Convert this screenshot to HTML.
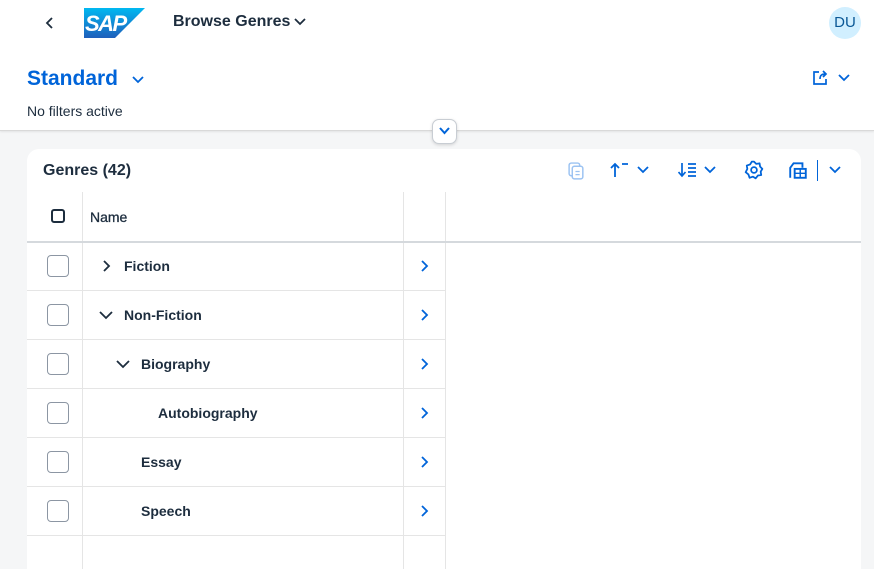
<!DOCTYPE html>
<html><head><style>
*{margin:0;padding:0;box-sizing:border-box}
body{width:874px;height:555px;overflow:hidden;background:#f5f6f7;font-family:"Liberation Sans",sans-serif;color:#1d2d3e;position:relative}
.a{position:absolute}
.hdr{left:0;top:0;width:874px;height:131px;background:#fff;border-bottom:1px solid #d9d9d9;box-shadow:0 1px 2px rgba(0,0,0,.08)}
.card{left:27px;top:149px;width:834px;height:420px;background:#fff;border-radius:12px 12px 0 0;overflow:hidden}
.vl{position:absolute;width:1px;background:#e5e5e5}
.hl{position:absolute;height:1px;background:#e5e5e5;left:0;width:418px}
.cb{position:absolute;left:20px;width:22px;height:22px;border:1px solid #8c96a3;border-radius:4px;background:#fff}
.t{position:absolute;font-size:14px;font-weight:bold;color:#1d2d3e}
svg{position:absolute}
</style></head><body>
<div class="a hdr"></div>
<svg style="left:44px;top:16px" width="12" height="14" viewBox="0 0 12 14"><path d="M8 2 L3 7 L8 12" fill="none" stroke="#1d2d3e" stroke-width="1.8"/></svg>
<svg style="left:84px;top:8px" width="61" height="30" viewBox="0 0 61 30"><defs><linearGradient id="g" x1="0" y1="0" x2="0" y2="1"><stop offset="0" stop-color="#00b8f1"/><stop offset="1" stop-color="#1e5fbb"/></linearGradient></defs><path d="M0 0 H61 L31 30 H0 Z" fill="url(#g)"/><text x="1" y="23" font-family="Liberation Sans" font-weight="bold" font-style="italic" font-size="22" fill="#fff" letter-spacing="-1.5">SAP</text></svg>
<div class="a" style="left:173px;top:13px;font-size:16px;font-weight:bold">Browse Genres</div>
<svg style="left:294px;top:17px" width="12" height="10" viewBox="0 0 12 10"><path d="M1 2 L6 7 L11 2" fill="none" stroke="#1d2d3e" stroke-width="1.8"/></svg>
<div class="a" style="left:829px;top:7px;width:32px;height:32px;border-radius:50%;background:#d1efff;color:#0a5896;font-size:15px;text-align:center;line-height:32px">DU</div>
<div class="a" style="left:27px;top:67px;font-size:21px;font-weight:bold;color:#0064d9">Standard</div>
<svg style="left:132px;top:75px" width="12" height="10" viewBox="0 0 12 10"><path d="M1 2 L6 7 L11 2" fill="none" stroke="#0064d9" stroke-width="1.8"/></svg>
<div class="a" style="left:27px;top:103px;font-size:14px">No filters active</div>
<svg style="left:811px;top:69px" width="18" height="18" viewBox="0 0 18 18"><path d="M8 3 H3 V15 H15 V10 M9 10 C9 6 11 5 15 5 M12 2 L15 5 L12 8" fill="none" stroke="#0064d9" stroke-width="1.7"/></svg>
<svg style="left:838px;top:73px" width="12" height="10" viewBox="0 0 12 10"><path d="M1 2 L6 7 L11 2" fill="none" stroke="#0064d9" stroke-width="1.8"/></svg>
<div class="a" style="left:432px;top:119px;width:25px;height:25px;background:#fff;border:1px solid #c8cdd3;border-radius:7px;box-shadow:0 1px 3px rgba(0,0,0,.15)"></div>
<svg style="left:438px;top:126px" width="13" height="10" viewBox="0 0 13 10"><path d="M2 2 L6.5 7 L11 2" fill="none" stroke="#0064d9" stroke-width="2"/></svg>
<div class="a card">
 <div class="t" style="left:16px;top:13px;font-size:16px">Genres (42)</div>
 <svg style="left:541px;top:13px" width="17" height="19" viewBox="0 0 16 18"><rect x="1" y="1" width="10" height="12" rx="2" fill="none" stroke="#9cc3f2" stroke-width="1.4"/><rect x="4" y="4" width="10" height="12" rx="2" fill="#fff" stroke="#9cc3f2" stroke-width="1.4"/><path d="M7 9 H11 M7 12 H11" stroke="#9cc3f2" stroke-width="1.2"/></svg>
 <svg style="left:583px;top:13px" width="20" height="16" viewBox="0 0 20 16"><path d="M5 15 V2 M1 6 L5 2 L9 6 M12 2 H18" fill="none" stroke="#0064d9" stroke-width="1.8"/></svg>
 <svg style="left:610px;top:16px" width="12" height="10" viewBox="0 0 12 10"><path d="M1 2 L6 7 L11 2" fill="none" stroke="#0064d9" stroke-width="1.8"/></svg>
 <svg style="left:651px;top:13px" width="20" height="16" viewBox="0 0 20 16"><path d="M4 1 V14 M0.5 10 L4 14 L7.5 10 M10 2 H18 M10 6 H18 M10 10 H18 M10 14 H18" fill="none" stroke="#0064d9" stroke-width="1.7"/></svg>
 <svg style="left:677px;top:16px" width="12" height="10" viewBox="0 0 12 10"><path d="M1 2 L6 7 L11 2" fill="none" stroke="#0064d9" stroke-width="1.8"/></svg>
 <svg style="left:717px;top:11px" width="20" height="20" viewBox="0 0 18 18"><path d="M9 1.5 L11 3.5 L14 3 L14.5 6 L16.5 8 L15 10.5 L15.5 13.5 L12.5 14 L10.5 16.5 L8 15 L5 16 L4 13 L1.5 11 L3 8 L2.5 5 L5.5 4 L7 1.5 Z" fill="none" stroke="#0064d9" stroke-width="1.6" stroke-linejoin="round"/><circle cx="9" cy="9" r="2.6" fill="none" stroke="#0064d9" stroke-width="1.6"/></svg>
 <svg style="left:761px;top:11px" width="20" height="20" viewBox="0 0 18 18"><path d="M2 16 V7 L5 3 H13 V7" fill="none" stroke="#0064d9" stroke-width="1.7"/><rect x="6" y="8" width="10" height="8" fill="#fff" stroke="#0064d9" stroke-width="1.7"/><path d="M11 8 V16 M6 12 H16" stroke="#0064d9" stroke-width="1.3"/></svg>
 <div class="vl" style="left:790px;top:11px;height:21px;background:#0064d9"></div>
 <svg style="left:802px;top:16px" width="12" height="10" viewBox="0 0 12 10"><path d="M1 2 L6 7 L11 2" fill="none" stroke="#0064d9" stroke-width="1.8"/></svg>
 <div class="vl" style="left:55px;top:43px;height:400px"></div>
 <div class="vl" style="left:376px;top:43px;height:400px"></div>
 <div class="vl" style="left:418px;top:43px;height:400px"></div>
 <div style="position:absolute;left:0;top:92px;width:834px;height:2px;background:#d5d9dd"></div>
 <div style="position:absolute;left:24px;top:60px;width:14px;height:14px;border:2px solid #1d2d3e;border-radius:3px"></div>
 <div class="t" style="left:63px;top:60px;font-size:14px;font-weight:normal;-webkit-text-stroke:0.3px #1d2d3e">Name</div>
 <div class="hl" style="top:141px"></div><div class="hl" style="top:190px"></div><div class="hl" style="top:239px"></div><div class="hl" style="top:288px"></div><div class="hl" style="top:337px"></div><div class="hl" style="top:386px"></div>
 <div class="cb" style="top:106px"></div><div class="cb" style="top:155px"></div><div class="cb" style="top:204px"></div><div class="cb" style="top:253px"></div><div class="cb" style="top:302px"></div><div class="cb" style="top:351px"></div>
 <svg style="left:74px;top:111px" width="10" height="12" viewBox="0 0 10 12"><path d="M3 1 L8 6 L3 11" fill="none" stroke="#1d2d3e" stroke-width="1.8"/></svg>
 <svg style="left:72px;top:161px" width="14" height="10" viewBox="0 0 14 10"><path d="M1 2 L7 8 L13 2" fill="none" stroke="#1d2d3e" stroke-width="1.8"/></svg>
 <svg style="left:89px;top:210px" width="14" height="10" viewBox="0 0 14 10"><path d="M1 2 L7 8 L13 2" fill="none" stroke="#1d2d3e" stroke-width="1.8"/></svg>
 <div class="t" style="left:97px;top:109px">Fiction</div>
 <div class="t" style="left:97px;top:158px">Non-Fiction</div>
 <div class="t" style="left:114px;top:207px">Biography</div>
 <div class="t" style="left:131px;top:256px">Autobiography</div>
 <div class="t" style="left:114px;top:305px">Essay</div>
 <div class="t" style="left:114px;top:354px">Speech</div>
 <svg style="left:392px;top:111px" width="10" height="12" viewBox="0 0 10 12"><path d="M3 1 L8 6 L3 11" fill="none" stroke="#0064d9" stroke-width="1.8"/></svg>
 <svg style="left:392px;top:160px" width="10" height="12" viewBox="0 0 10 12"><path d="M3 1 L8 6 L3 11" fill="none" stroke="#0064d9" stroke-width="1.8"/></svg>
 <svg style="left:392px;top:209px" width="10" height="12" viewBox="0 0 10 12"><path d="M3 1 L8 6 L3 11" fill="none" stroke="#0064d9" stroke-width="1.8"/></svg>
 <svg style="left:392px;top:258px" width="10" height="12" viewBox="0 0 10 12"><path d="M3 1 L8 6 L3 11" fill="none" stroke="#0064d9" stroke-width="1.8"/></svg>
 <svg style="left:392px;top:307px" width="10" height="12" viewBox="0 0 10 12"><path d="M3 1 L8 6 L3 11" fill="none" stroke="#0064d9" stroke-width="1.8"/></svg>
 <svg style="left:392px;top:356px" width="10" height="12" viewBox="0 0 10 12"><path d="M3 1 L8 6 L3 11" fill="none" stroke="#0064d9" stroke-width="1.8"/></svg>
</div>
</body></html>
